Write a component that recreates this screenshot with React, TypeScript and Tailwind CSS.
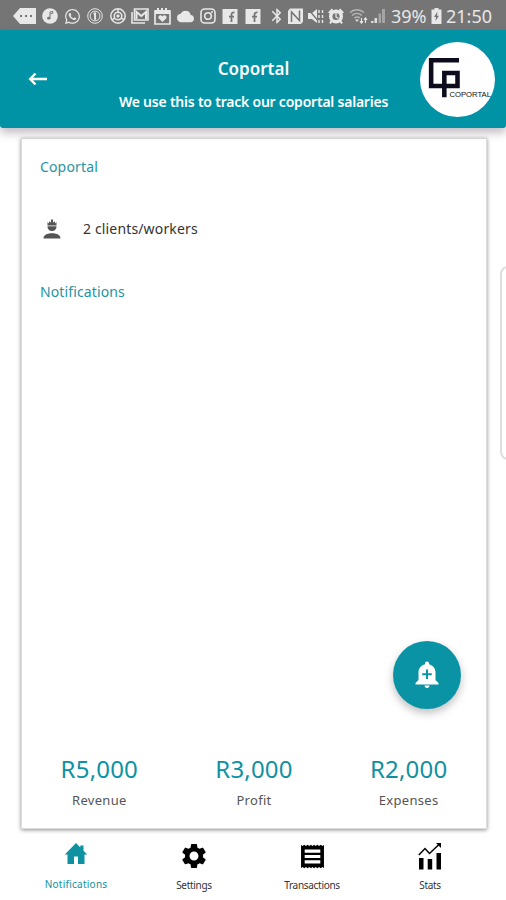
import React from "react";
import clsx from "clsx";
import { FaWhatsapp } from "react-icons/fa";
import { MdBluetooth, MdCloud, MdSettings } from "react-icons/md";

type IconProps = { className?: string };

const TagIcon = () => (
  <svg className="h-4 w-6" viewBox="0 0 24 16" fill="currentColor">
    <path
      fillRule="evenodd"
      d="M7 0h16v16H7L0 8zM7 7v2h2V7zm5 0v2h2V7zm5 0v2h2V7z"
    />
  </svg>
);

const MusicIcon = () => (
  <svg className="size-4" viewBox="0 0 16 16">
    <circle cx="8" cy="8" r="7.8" fill="currentColor" />
    <ellipse cx="6.8" cy="10.2" rx="1.7" ry="1.4" fill="#757575" />
    <path d="M8 10V4l2.8-.6v1.8L8.5 6" fill="none" stroke="#757575" strokeWidth="1" />
  </svg>
);

const CoinIcon = () => (
  <svg className="size-4" viewBox="0 0 16 16" fill="none" stroke="currentColor">
    <circle cx="8" cy="8" r="7.3" />
    <circle cx="8" cy="8" r="4.9" />
    <path d="M6.5 5.6h1.6v6.2" strokeWidth="2" />
  </svg>
);

const BrowserIcon = () => (
  <svg className="size-4" viewBox="0 0 16 16" fill="none" stroke="currentColor">
    <circle cx="8" cy="8" r="7.2" strokeWidth="1.5" />
    <circle cx="8" cy="8" r="3.8" strokeWidth="1.5" />
    <circle cx="8" cy="8" r="1.2" fill="currentColor" />
    <path d="M8 4V1M4.8 10.1l-2.5 1.5M11.2 10.1l2.5 1.5" strokeWidth="1.4" />
  </svg>
);

const MailIcon = () => (
  <svg className="h-4 w-[18px]" viewBox="0 0 18 16">
    <path d="M3.5 1H17v11H3.5zM1 4v11h13" fill="none" stroke="currentColor" strokeWidth="1.6" />
    <path d="M5.5 11V4l4.8 4L15 4v7" fill="none" stroke="currentColor" strokeWidth="2" />
  </svg>
);

const CalendarIcon = () => (
  <svg className="h-[17px] w-[17px]" viewBox="0 0 17 17">
    <path d="M1 3h15v13H1z" fill="none" stroke="currentColor" strokeWidth="1.7" />
    <path d="M1 2h2V0h2v2h2V0h2v2h2V0h2v2h3v4H1z" fill="currentColor" />
    <path
      d="M8.5 14 4.8 10.5C3.3 8.6 6.5 5.8 8.5 8.4c2-2.6 5.2.2 3.7 2.1z"
      fill="currentColor"
    />
  </svg>
);

const CameraIcon = () => (
  <svg className="size-4" viewBox="0 0 16 16" fill="none" stroke="currentColor">
    <rect x="1" y="1" width="14" height="14" rx="3.5" strokeWidth="1.6" />
    <circle cx="8" cy="8" r="3.3" strokeWidth="1.6" />
    <circle cx="12" cy="4" r=".6" fill="currentColor" />
  </svg>
);

const FacebookIcon = () => (
  <svg className="size-4" viewBox="0 0 16 16">
    <path d="M.5 1h15v15H.5z" fill="currentColor" />
    <path d="M9.5 14V7c0-2 .8-2.7 3-2.6M7 8.7h5" fill="none" stroke="#757575" strokeWidth="1.8" />
  </svg>
);

const NfcIcon = () => (
  <svg className="h-4 w-[15px]" viewBox="0 0 15 16">
    <path d="M2 .5h13v13L13 16H0V3z" fill="currentColor" />
    <path d="M3.5 14V4l8 8.5V2.5" fill="none" stroke="#757575" strokeWidth="1.5" />
  </svg>
);

const MuteIcon = () => (
  <svg className="h-4 w-[17px]" viewBox="0 0 17 16">
    <path d="M1 5h4l5-4v14l-5-4H1z" fill="currentColor" />
    <path d="m1 1 12 14" stroke="#757575" strokeWidth="1.3" />
    <path
      d="M12 2v3M12 7v3M12 12v3M15.5 2v3M15.5 7v3M15.5 12v3"
      stroke="currentColor"
      strokeWidth="1.4"
    />
  </svg>
);

const AlarmIcon = () => (
  <svg className="size-4" viewBox="0 0 16 16" fill="none" stroke="currentColor">
    <circle cx="8" cy="8.5" r="5.3" strokeWidth="3.4" />
    <path d="M8 5v4l2.5 1.5" strokeWidth="1.3" />
    <path d="M.8 5 4.500 1.200M15.200 5l-3.700-3.800M3.500 13l-1.500 2.500M12.500 13l1.500 2.500" strokeWidth="2" />
  </svg>
);

const WifiIcon = () => (
  <svg className="h-4 w-[19px]" viewBox="0 0 19 16" fill="none">
    <path d="M1 4.5C5 .8 11 .8 15 4.5M3 7.5c3-2.7 7-2.7 10 0M5.5 10c1.5-1.5 4-1.5 5.5 0" stroke="#b5b5b5" strokeWidth="1.5" />
    <path d="m8 14-2-2.5h4z" fill="#ddd" />
    <path d="M12.5 10v5M11 13.2l1.5 2 1.5-2M16.5 15v-5M15 11.8l1.5-2 1.5 2" stroke="currentColor" strokeWidth="1.1" />
  </svg>
);

const SignalIcon = () => (
  <svg className="h-4 w-4" viewBox="0 0 16 16" fill="#a5a5a5">
    <path d="M1 13h2.5v2H1zM4.5 10H7v5H4.5z" fill="#ddd" />
    <path d="M8.5 5.5H11V15H8.5zM12 1h3v14h-3z" />
  </svg>
);

const BatteryIcon = () => (
  <svg className="h-4 w-[11px]" viewBox="0 0 11 16">
    <path d="M3.5 0h4v1.500h3V16H.5V1.500h3z" fill="currentColor" />
    <path d="M6.500 3.500 3 9h2l-.5 4L8 7.700H6z" fill="#757575" />
  </svg>
);

const StatusBar = () => (
  <div className="flex h-[30px] items-center bg-[#757575] pt-[2px] pl-[13px] text-[#e8e8e8]">
    <div className="flex w-[259px] items-center">
      <TagIcon />
      <div className="ml-[2px] flex items-center *:w-[22.5px] *:shrink-0">
        <span className="flex justify-center"><MusicIcon /></span>
        <span className="flex justify-center"><FaWhatsapp className="size-[17px]" /></span>
        <span className="flex justify-center"><CoinIcon /></span>
        <span className="flex justify-center"><BrowserIcon /></span>
        <span className="flex justify-center"><MailIcon /></span>
        <span className="flex justify-center"><CalendarIcon /></span>
        <span className="flex justify-center"><MdCloud className="size-[17px]" /></span>
        <span className="flex justify-center"><CameraIcon /></span>
        <span className="flex justify-center"><FacebookIcon /></span>
        <span className="flex justify-center"><FacebookIcon /></span>
      </div>
    </div>
    <MdBluetooth className="-ml-[4px] size-[18px]" />
    <span className="ml-[2px]"><NfcIcon /></span>
    <span className="ml-[4px]"><MuteIcon /></span>
    <span className="ml-[4px]"><AlarmIcon /></span>
    <span className="ml-[5px]"><WifiIcon /></span>
    <span className="ml-[2px]"><SignalIcon /></span>
    <span className="ml-[5px] w-[38px] text-[18px] leading-none whitespace-nowrap">39%</span>
    <span className="ml-[2px]"><BatteryIcon /></span>
    <span className="ml-[4px] text-[18px] leading-none">21:50</span>
  </div>
);

const BackIcon = () => (
  <svg
    className="h-[14px] w-5"
    viewBox="0 0 20 14"
    fill="none"
    stroke="currentColor"
    strokeWidth="2.4"
  >
    <path d="M19 7H2.500M7.500 1.500 2.200 7l5.300 5.500" />
  </svg>
);

const Logo = () => (
  <div className="flex size-[75px] items-center justify-center rounded-full bg-white">
    <svg className="size-[75px]" viewBox="0 0 74 74">
      <g fill="none" stroke="#0d0c1f" strokeWidth="4.5">
        <path d="M38.500 18H11v25.500h26V30.500H24v24" />
      </g>
      <text
        x="29"
        y="54"
        fontSize="7.5"
        textLength="41"
        lengthAdjust="spacingAndGlyphs"
        fill="#111"
        fontFamily="Liberation Sans, sans-serif"
      >
        COPORTAL
      </text>
    </svg>
  </div>
);

const Header = () => (
  <header className="relative z-10 flex h-[98px] items-start rounded-b-[3px] bg-[#0093a5] text-white shadow-[0_5px_8px_rgba(60,40,60,0.3)]">
    <div className="flex w-[87px] pt-[42px] pl-[28px]">
      <BackIcon />
    </div>
    <div className="flex flex-1 flex-col items-center pt-[26px]">
      <h1 className="text-[17px] leading-[26px] font-semibold">Coportal</h1>
      <p className="mt-[8px] text-[14px] leading-[24px] font-semibold tracking-[-0.22px] whitespace-nowrap">
        We use this to track our coportal salaries
      </p>
    </div>
    <div className="flex w-[86px] pt-[12px]">
      <Logo />
    </div>
  </header>
);

const WorkerIcon = () => (
  <svg className="h-5 w-[18px]" viewBox="0 0 18 20" fill="#555">
    <path d="M4.500 3 6 4.500V2.200L8 3.500V.5h2v3l2-1.300v2.300L13.500 3v3.500h-9zM4.500 7.200h9c0 3.500-2.500 4.800-4.500 4.800s-4.500-1.300-4.500-4.800zM.5 19.500c0-3 3-5.200 8.500-5.200s8.500 2.200 8.500 5.200z" />
  </svg>
);

const BellPlusIcon = () => (
  <svg className="h-7 w-6" viewBox="0 0 24 28" fill="currentColor">
    <path
      fillRule="evenodd"
      d="M12 .5c1.300 0 2 .9 2 2v.8c4 1 6.500 4.200 6.500 8.200v7.500L23.500 22v1.500H.5V22l3-3v-7.500c0-4 2.500-7.200 6.500-8.200v-.8c0-1.100.7-2 2-2zM11 8.500v3.800H7.200v2H11V18h2v-3.700h3.800v-2H13V8.500z"
    />
    <path d="M9.500 24.500h5c0 1.500-1.100 2.500-2.500 2.500s-2.500-1-2.500-2.500z" />
  </svg>
);

const HomeIcon = ({ className }: IconProps) => (
  <svg className={className} viewBox="0 0 24 24" fill="currentColor">
    <path d="M12 1 .8 12.500h2.700V22H10v-7.500h4V22h6.500v-9.500h2.700L19.500 8.700V3.500h-3.200v1.900z" />
  </svg>
);

const ReceiptIcon = ({ className }: IconProps) => (
  <svg className={className} viewBox="0 0 24 24" fill="currentColor">
    <path
      fillRule="evenodd"
      d="M1 1l1.500 1L4 .8 5.700 2 7.300.8 9 2 10.500.8 12 2 13.500.8 15 2 16.700.8 18.300 2 20 .8 21.500 2 23 1v22l-1.500-1-1.500 1.200L18.300 22l-1.600 1.200L15 22l-1.500 1.200L12 22l-1.500 1.200L9 22l-1.700 1.200L5.700 22 4 23.200 2.500 22 1 23zM4.500 5.300v3h15v-3zM4.500 10.500v3h15v-3zM4.500 15.700v3h15v-3z"
    />
  </svg>
);

const StatsIcon = ({ className }: IconProps) => (
  <svg className={className} viewBox="0 0 24 28" fill="currentColor">
    <path d="M1 16h4.500v11.500H1zM9.700 17h4.500v10.500H9.700zM18.500 11H23v16.500h-4.500z" />
    <path d="M.8 13 7 6.500l4.500 5L21.500 2" fill="none" stroke="currentColor" strokeWidth="1.5" />
    <path d="M18 1h5v5z" />
  </svg>
);

const totals = [
  { label: "Revenue", value: "R5,000" },
  { label: "Profit", value: "R3,000" },
  { label: "Expenses", value: "R2,000" },
];

const Totals = () => (
  <div className="grid grid-cols-3">
    {totals.map((total) => (
      <div key={total.label} className="flex flex-col items-center">
        <span className="text-[24px] leading-[32px] tracking-[0.2px] text-[#0f91a1]">
          {total.value}
        </span>
        <span className="mt-[4px] text-[13px] leading-[22px] tracking-[0.3px] text-[#555]">
          {total.label}
        </span>
      </div>
    ))}
  </div>
);

const tabs = [
  { label: "Notifications", icon: <HomeIcon className="mb-[5px] size-6" />, active: true },
  { label: "Settings", icon: <MdSettings className="size-[30px]" /> },
  { label: "Transactions", icon: <ReceiptIcon className="size-[25px]" /> },
  { label: "Stats", icon: <StatsIcon className="h-7 w-6" /> },
];

const BottomNav = () => (
  <nav className="flex justify-center">
    {tabs.map((tab) => (
      <div
        key={tab.label}
        className={clsx(
          "flex w-[118px] flex-col items-center",
          tab.active ? "text-[#0f91a1]" : "text-black"
        )}
      >
        <div className="flex h-[30px] items-center justify-center">{tab.icon}</div>
        <span
          className={clsx(
            "text-[10px] leading-[16px]",
            tab.active
              ? "mt-[5px] tracking-[0.25px]"
              : "mt-[6px] tracking-[-0.3px] text-[#333]"
          )}
        >
          {tab.label}
        </span>
      </div>
    ))}
  </nav>
);

const App = () => {
  return (
    <div className="relative flex h-[900px] w-[506px] flex-col overflow-hidden bg-white font-['Noto_Sans',sans-serif]">
      <StatusBar />
      <Header />

      <main className="relative ml-[21px] mt-[10px] flex h-[691px] w-[466px] flex-col border border-[#ddd] bg-white shadow-[0_1px_4px_rgba(0,0,0,0.45)]">
        <h2 className="mt-[17px] ml-[18px] text-[14px] leading-[22px] tracking-[0.15px] text-[#2594a3]">
          Coportal
        </h2>
        <div className="mt-[38px] ml-[21px] flex h-[26px] items-center">
          <WorkerIcon />
          <span className="mb-[2px] ml-[22px] text-[14px] tracking-[0.15px] text-[#333]">
            2 clients/workers
          </span>
        </div>
        <h2 className="mt-[39px] ml-[18px] text-[14px] leading-[22px] tracking-[0.12px] text-[#2594a3]">
          Notifications
        </h2>

        <div className="mt-auto mb-[17px]">
          <Totals />
        </div>

        {/* === Add notification button === */}
        <button className="absolute right-[25px] bottom-[119px] flex size-[68px] items-center justify-center rounded-full bg-[#0993a4] text-white shadow-[0_4px_8px_rgba(0,0,0,0.25)]">
          <BellPlusIcon />
        </button>
      </main>

      <div className="mt-[12px]">
        <BottomNav />
      </div>

      {/* === Edge panel handle === */}
      <div className="absolute top-[266px] left-[500px] h-[194px] w-5 rounded-lg border-2 border-[#ddd] bg-white" />
    </div>
  );
};

export default App;
